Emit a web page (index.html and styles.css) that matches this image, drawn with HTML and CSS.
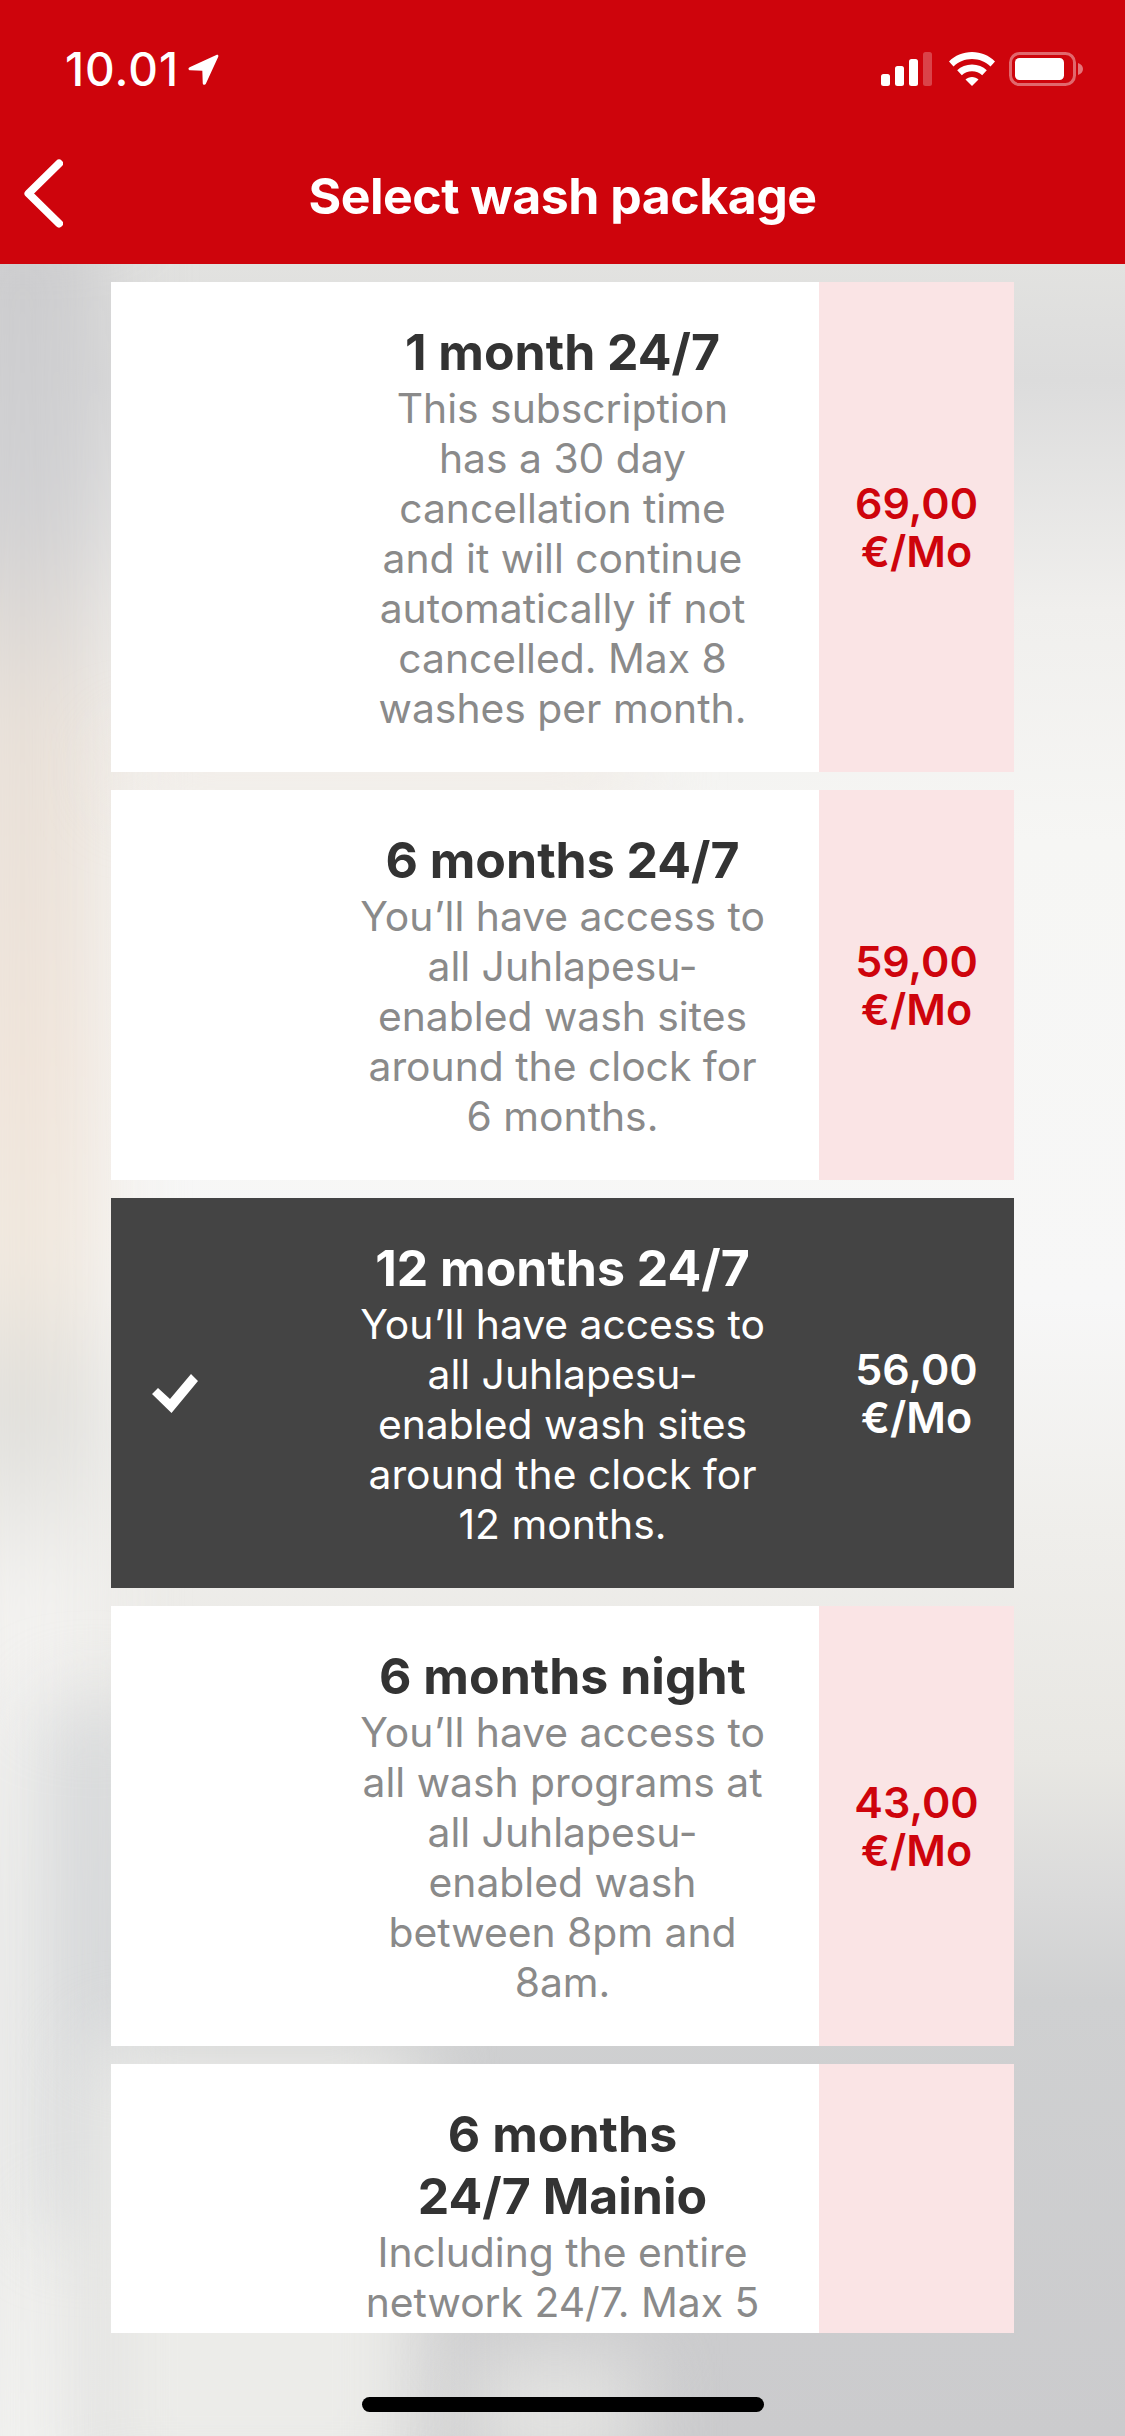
FILE: index.html
```html
<!DOCTYPE html>
<html>
<head>
    <meta charset="utf-8">
    <title>Select wash package</title>
    <link rel="stylesheet" href="styles.css">
</head>
<body>
    <div class="screen">
        <div class="backdrop">
            <div class="blob blob-left"></div>
            <div class="blob blob-shade"></div>
            <div class="blob blob-warm"></div>
            <div class="blob blob-low"></div>
            <div class="blob blob-low2"></div>
        </div>

        <header class="header">
            <div class="status-bar">
                <div class="status-time">
                    <span>10.01</span>
                    <svg class="location-icon" viewBox="0 0 29 29"><path d="M27 .8 1.500 12.300c-1.800.9-1.200 3 .6 3l11.300.3.4 11.700c.1 1.700 2.200 2 2.900.6L28.300 2.500c.4-1.100-.4-2.100-1.300-1.700z" fill="#fff"/></svg>
                </div>
                <div class="status-icons">
                    <svg class="signal-icon" viewBox="0 0 52 34">
                        <rect x="0" y="22" width="9" height="12" rx="2.500" fill="#fff"/>
                        <rect x="14" y="14" width="9" height="20" rx="2.500" fill="#fff"/>
                        <rect x="28" y="7" width="9" height="27" rx="2.500" fill="#fff"/>
                        <rect x="42" y="0" width="9" height="34" rx="2.500" fill="#fff" opacity=".25"/>
                    </svg>
                    <svg class="wifi-icon" viewBox="0 0 48 34">
                        <path d="M24 0C15 0 7 3.500 1 9.500l4.500 5C10.500 9.700 17 7 24 7s13.500 2.700 18.500 7.500l4.500-5C41 3.500 33 0 24 0z" fill="#fff"/>
                        <path d="M24 12.500c-5.800 0-11 2.200-14.800 5.800l4.600 5c2.700-2.500 6.300-4 10.200-4s7.500 1.500 10.200 4l4.600-5C35 14.700 29.800 12.500 24 12.500z" fill="#fff"/>
                        <path d="M24 25c-2.500 0-4.800 1-6.500 2.500L24 34l6.500-6.500C28.800 26 26.500 25 24 25z" fill="#fff"/>
                    </svg>
                    <svg class="battery-icon" viewBox="0 0 74 34">
                        <rect x="1.500" y="1.500" width="64" height="31" rx="9" fill="none" stroke="#fff" stroke-opacity=".4" stroke-width="3"/>
                        <rect x="6" y="6" width="49" height="22" rx="4.500" fill="#fff"/>
                        <path d="M69 11c3 1 5 3.200 5 6s-2 5-5 6z" fill="#fff" fill-opacity=".45"/>
                    </svg>
                </div>
            </div>
            <div class="nav-bar">
                <svg class="back-icon" viewBox="0 0 39 69"><path d="M35 4.500 4.500 34.500 35 64.500" fill="none" stroke="#fff" stroke-width="8" stroke-linecap="round" stroke-linejoin="round"/></svg>
                <h1 class="nav-title">Select wash package</h1>
            </div>
        </header>

        <main class="package-list">
            <div class="package">
                <div class="package-check"></div>
                <div class="package-info">
                    <h2 class="package-name">1 month 24/7</h2>
                    <p class="package-text">This subscription<br>has a 30 day<br>cancellation time<br>and it will continue<br>automatically if not<br>cancelled. Max 8<br>washes per month.</p>
                </div>
                <div class="package-price">69,00<br>€/Mo</div>
            </div>

            <div class="package">
                <div class="package-check"></div>
                <div class="package-info">
                    <h2 class="package-name">6 months 24/7</h2>
                    <p class="package-text">You’ll have access to<br>all Juhlapesu-<br>enabled wash sites<br>around the clock for<br>6 months.</p>
                </div>
                <div class="package-price">59,00<br>€/Mo</div>
            </div>

            <div class="package selected">
                <div class="package-check">
                    <svg class="check-icon" viewBox="22 13 46 39"><path d="M22 33 28 27 40 38 61 13 68 20 41.500 52z" fill="#fff"/></svg>
                </div>
                <div class="package-info">
                    <h2 class="package-name">12 months 24/7</h2>
                    <p class="package-text">You’ll have access to<br>all Juhlapesu-<br>enabled wash sites<br>around the clock for<br>12 months.</p>
                </div>
                <div class="package-price">56,00<br>€/Mo</div>
            </div>

            <div class="package">
                <div class="package-check"></div>
                <div class="package-info">
                    <h2 class="package-name">6 months night</h2>
                    <p class="package-text">You’ll have access to<br>all wash programs at<br>all Juhlapesu-<br>enabled wash<br>between 8pm and<br>8am.</p>
                </div>
                <div class="package-price">43,00<br>€/Mo</div>
            </div>

            <div class="package package-cut">
                <div class="package-check"></div>
                <div class="package-info">
                    <h2 class="package-name">6 months<br>24/7 Mainio</h2>
                    <p class="package-text">Including the entire<br>network 24/7. Max 5</p>
                </div>
                <div class="package-price"></div>
            </div>
        </main>

        <div class="home-indicator"></div>
    </div>
</body>
</html>
```

FILE: styles.css
```css
* {
    box-sizing: border-box;
}
html, body {
    margin: 0;
    padding: 0;
}
body {
    font-family: Inter, "Liberation Sans", sans-serif;
}
.screen {
    position: relative;
    width: 1125px;
    height: 2436px;
    overflow: hidden;
    display: flex;
    flex-direction: column;
    background: linear-gradient(180deg, #e2e2e0 264px, #dcdcdc 380px, #f0efed 610px, #f6f6f4 840px, #f7f7f7 1300px, #efeeeb 1530px, #e8e7e3 1760px, #dadada 1895px, #cfd0d1 2000px, #cbcbcd 2436px);
}

/* blurred photo behind the list */
.backdrop {
    position: absolute;
    top: 264px;
    left: 0;
    right: 0;
    bottom: 0;
    overflow: hidden;
}
.blob {
    position: absolute;
    filter: blur(40px);
}
.blob-left {
    left: -60px;
    top: -60px;
    width: 165px;
    height: 2350px;
    background: linear-gradient(180deg, #cbcbcd 0, #d0d0d2 300px, #e8e0d8 520px, #efe4da 860px, #f0e8de 1060px, #dfdeda 1210px, #f3f2f0 1400px, #eeeeec 1700px, #eeeeec 2000px, #f3f3f1 2350px);
}
.blob-shade {
    left: 50px;
    top: 1440px;
    width: 90px;
    height: 520px;
    background: #d5d7d9;
}
.blob-warm {
    left: 120px;
    top: 485px;
    width: 520px;
    height: 40px;
    background: #efe6de;
}
.blob-low {
    left: 90px;
    top: 1780px;
    width: 330px;
    height: 460px;
    background: #ecece9;
}
.blob-low2 {
    left: 470px;
    top: 2090px;
    width: 170px;
    height: 120px;
    background: #e4e4e2;
}

.header {
    position: relative;
    height: 264px;
    flex: none;
    background: #ce040c;
    color: #fff;
}
.status-bar {
    display: flex;
    justify-content: space-between;
    align-items: center;
    height: 104px;
    padding: 34px 42px 0 65px;
}
.status-time {
    display: flex;
    align-items: center;
    gap: 9px;
    font-size: 46px;
    font-weight: 500;
    letter-spacing: 1px;
}
.location-icon {
    width: 31px;
    height: 31px;
}
.status-icons {
    display: flex;
    align-items: center;
    gap: 15px;
}
.signal-icon {
    width: 52px;
    height: 34px;
}
.wifi-icon {
    width: 48px;
    height: 34px;
}
.battery-icon {
    width: 74px;
    height: 34px;
    margin-left: -2px;
}
.nav-bar {
    position: relative;
    display: flex;
    justify-content: center;
    align-items: center;
    height: 92px;
    margin-top: 46px;
}
.back-icon {
    position: absolute;
    left: 24px;
    top: 9px;
    width: 39px;
    height: 69px;
}
.nav-title {
    margin: 0;
    font-size: 50px;
    font-weight: 700;
    letter-spacing: -0.5px;
}

.package-list {
    position: relative;
    display: flex;
    flex-direction: column;
    gap: 18px;
    width: 903px;
    height: 2052px;
    margin: 18px auto 0;
    overflow: hidden;
}
.package {
    display: flex;
    flex: none;
    background: #fff;
}
.package-check {
    display: flex;
    align-items: center;
    width: 195px;
    flex: none;
    padding-left: 41px;
}
.check-icon {
    width: 46px;
    height: 39px;
}
.package-info {
    flex: 1;
    padding: 39px 0;
    text-align: center;
}
.package-cut {
    height: 269px;
}
.package-name {
    margin: 0;
    font-size: 50px;
    line-height: 62px;
    font-weight: 700;
    color: #333;
}
.package-text {
    margin: 0;
    font-size: 40.8px;
    line-height: 50px;
    color: #8a8a8a;
}
.package-price {
    display: flex;
    align-items: center;
    justify-content: center;
    width: 195px;
    flex: none;
    background: #fae4e5;
    font-size: 43px;
    line-height: 48px;
    font-weight: 600;
    text-align: center;
    color: #ce040c;
}
.package.selected {
    background: #444;
}
.selected .package-name,
.selected .package-text,
.selected .package-price {
    color: #fff;
}
.selected .package-price {
    background: #444;
}

.home-indicator {
    position: absolute;
    left: 362px;
    top: 2397px;
    width: 402px;
    height: 15px;
    border-radius: 8px;
    background: #000;
}
```
